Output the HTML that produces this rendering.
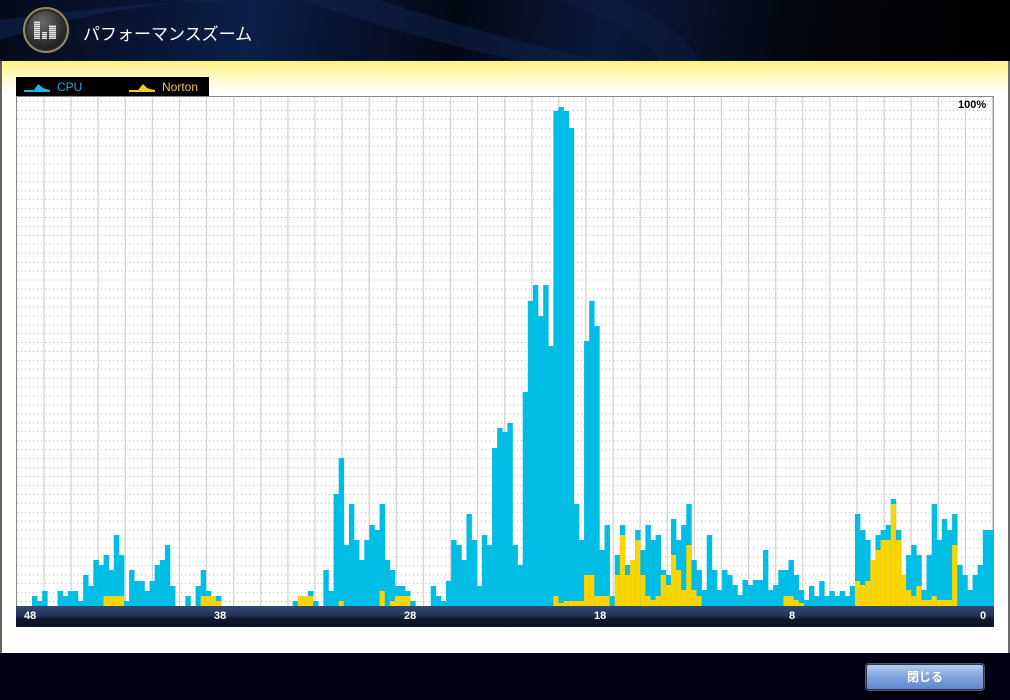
<!DOCTYPE html>
<html><head><meta charset="utf-8">
<style>
html,body{margin:0;padding:0;width:1010px;height:700px;overflow:hidden;background:#000010;font-family:"Liberation Sans","Noto Sans CJK JP",sans-serif;}
#hdr{position:absolute;left:0;top:0;width:1010px;height:61px;background:linear-gradient(100deg,#050a18 0%,#0b1f4a 25%,#030814 45%,#0a1a3c 60%,#02050c 80%,#000 100%);overflow:hidden}
#main{position:absolute;left:0;top:61px;width:1010px;height:592px;background:linear-gradient(#fff27e 0px,#fffbd8 20px,#fff 34px,#fff 100%)}
#lb{position:absolute;left:0;top:61px;width:2px;height:592px;background:#6b5f5a}
#rb{position:absolute;left:1008px;top:61px;width:2px;height:592px;background:#6b6b6b}
#foot{position:absolute;left:0;top:653px;width:1010px;height:47px;background:#000020}
#title{position:absolute;left:83px;top:20px;color:#fff;font-size:17px;font-weight:normal}
#legend{position:absolute;left:16px;top:77px;width:193px;height:19px;background:#000}
#legend span{position:absolute;top:3px;font-size:12px}
#btn{position:absolute;left:866px;top:664px;width:116px;height:24px;border:1px solid #2a3550;border-radius:3px;background:linear-gradient(#b6cdf0,#7fa3dc 50%,#5f88cb);color:#fff;font-weight:bold;font-size:12px;text-align:center;line-height:24px;box-shadow:0 0 0 1px #556}
</style></head><body>
<div id="hdr">
<svg width="1010" height="61" style="position:absolute;left:0;top:0">
<defs><radialGradient id="g1" cx=".4" cy=".3" r=".8"><stop offset="0" stop-color="#6a6a6a"/><stop offset="1" stop-color="#151515"/></radialGradient>
<pattern id="st" width="4" height="2" patternUnits="userSpaceOnUse"><rect width="4" height="1.2" fill="#e4e4e4"/><rect y="1.2" width="4" height=".8" fill="#999"/></pattern></defs>
<path d="M300 0 Q420 40 520 61 L600 61 Q470 30 380 0Z" fill="#10244e" opacity=".5"/>
<path d="M0 20 Q150 0 260 0 L200 0 Q90 10 0 40Z" fill="#14306a" opacity=".4"/>
<path d="M560 0 Q640 30 660 61 L700 61 Q680 25 620 0Z" fill="#0d1d40" opacity=".5"/>
<circle cx="46" cy="30" r="22" fill="#2a2a2a" stroke="#9a8860" stroke-width="2"/>
<circle cx="46" cy="30" r="19" fill="url(#g1)"/>
<rect x="34" y="21" width="6" height="18" fill="url(#st)"/><rect x="42" y="32" width="5" height="7" fill="url(#st)"/><rect x="49" y="25" width="7" height="14" fill="url(#st)"/>
</svg>
<div id="title">パフォーマンスズーム</div>
</div>
<div id="main"></div>
<div id="lb"></div><div id="rb"></div>
<div id="legend">
<svg width="193" height="19" style="position:absolute;left:0;top:0">
<path d="M8 13 L18 13 L22 7 L27 11 L30 12 L34 13 L34 15 L8 15Z" fill="#1fb4e4"/>
<path d="M113 13 L122 13 L127 7 L131 11 L134 12 L139 13 L139 15 L113 15Z" fill="#e9cf2a"/>
</svg>
<span style="left:41px;color:#22a8d8">CPU</span>
<span style="left:146px;color:#e8c64a">Norton</span>
</div>
<svg id="chart" width="1010" height="700" style="position:absolute;left:0;top:0"></svg>
<div style="position:absolute;left:958px;top:99px;font-size:11px;font-weight:bold;color:#000">100%</div>
<div id="axis" style="position:absolute;left:16px;top:606px;width:978px;height:21px;background:linear-gradient(#34486e,#22345a 45%,#0f1a30 60%,#0a1222)"></div>
<div style="position:absolute;top:610px;left:0;width:1010px;font-size:11px;font-weight:bold;color:#fff">
<span style="position:absolute;left:24px">48</span>
<span style="position:absolute;left:214px">38</span>
<span style="position:absolute;left:404px">28</span>
<span style="position:absolute;left:594px">18</span>
<span style="position:absolute;left:789px">8</span>
<span style="position:absolute;left:980px">0</span>
</div>
<div id="btn">閉じる</div>
<script>
var cpu=[10,5,15,0,0,15,10,15,15,5,31,20,46,41,51,36,71,51,5,36,25,25,15,25,41,46,61,20,0,0,10,0,20,36,15,10,10,
0,0,0,0,0,0,0,0,0,0,0,0,0,0,5,10,10,15,5,0,36,15,112,148,61,102,66,46,66,81,76,102,46,36,20,20,15,5,0,0,0,20,10,5,25,66,61,46,92,66,20,71,61,158,178,174,183,61,41,214,305,321,290,321,260,495,499,495,478,102,66,265,305,280,56,81,10,51,81,41,46,76,56,81,66,71,36,31,87,66,81,102,46,36,16,71,36,16,36,31,21,11,26,21,26,26,56,16,21,36,36,46,31,16,6,20,10,25,10,15,10,15,10,20,92,76,66,46,71,76,81,107,76,31,51,61,51,16,51,102,66,87,76,92,41,31,16,31,41,76,76];
var nor={14:10,15:10,16:10,17:10,33:10,34:10,35:10,36:5,52:10,53:10,54:10,60:5,68:15,70:5,71:10,72:10,73:10,102:10,103:3,104:5,105:5,106:5,107:5,108:31,109:31,110:10,111:10,112:10,114:31,115:71,116:31,117:46,118:66,119:31,120:10,121:6,122:10,123:31,124:21,125:51,126:36,127:16,128:61,129:16,130:10,147:10,148:10,149:6,150:3,161:25,162:21,163:25,164:46,165:56,166:66,167:66,168:102,169:66,170:31,171:16,172:10,173:20,174:6,175:6,176:10,177:6,178:6,179:6,180:61};
var s='<rect x="16.5" y="96.5" width="977" height="510" fill="#fff" stroke="#888"/>';
for(var x=44;x<993;x+=27.1)s+='<line x1="'+x.toFixed(1)+'" y1="97" x2="'+x.toFixed(1)+'" y2="606" stroke="#d4d4d4" stroke-width="1.3"/>';
for(var y=601.5;y>98;y-=8.93)s+='<line x1="17" y1="'+y.toFixed(1)+'" x2="993" y2="'+y.toFixed(1)+'" stroke="#bbb" stroke-dasharray="1,3"/>';
var p=961/188;
for(var i=0;i<cpu.length;i++){var x0=32+i*p,w=p+0.3;var h=cpu[i];if(h)s+='<rect x="'+x0.toFixed(2)+'" y="'+(606-h)+'" width="'+w.toFixed(2)+'" height="'+h+'" fill="#00bde6"/>';
var n=nor[i];if(n)s+='<rect x="'+x0.toFixed(2)+'" y="'+(606-n)+'" width="'+w.toFixed(2)+'" height="'+n+'" fill="#fcd500"/>';}
document.getElementById('chart').innerHTML=s;
</script>
</body></html>
